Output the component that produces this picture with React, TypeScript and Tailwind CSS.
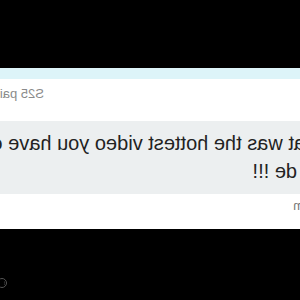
export default function App() {
  return (
    <div className="w-[300px] h-[300px] bg-black overflow-hidden">
      <div className="w-[300px] h-[300px] -scale-x-100 flex flex-col" style={{ fontFamily: '"Liberation Sans", Arial, sans-serif' }}>
        <div className="h-[68px] bg-black shrink-0" />
        <div className="h-[11px] bg-[#ddf4f9] shrink-0" />
        <div className="h-[42px] bg-white shrink-0 overflow-hidden pt-[5px]">
          <div className="pl-[256px] whitespace-nowrap text-[13px] leading-[20px] text-[#8a8a8a]">S25 pair</div>
        </div>
        <div className="h-[73px] bg-[#eceff0] shrink-0 overflow-hidden pt-[8px]">
          <div className="ml-[-35px] w-[380px] text-[20px] leading-[28px] text-[#222222]">
            <div className="whitespace-nowrap">What was the hottest video you have ever</div>
            <div className="whitespace-nowrap pl-[38px]">de !!!</div>
          </div>
        </div>
        <div className="h-[35px] bg-white shrink-0 overflow-hidden pt-[4px]">
          <div className="ml-[-4px] text-[13px] leading-[16px] text-[#777777]">m</div>
        </div>
        <div className="flex-1 bg-black relative">
          <svg className="absolute left-[292px] top-[48px]" width="12" height="12" viewBox="0 0 12 12">
            <circle cx="6" cy="6" r="4.5" fill="none" stroke="#555" strokeWidth="1" />
            <circle cx="3.5" cy="5" r="0.6" fill="#555" />
            <circle cx="3.5" cy="7" r="0.6" fill="#555" />
          </svg>
        </div>
      </div>
    </div>
  );
}
